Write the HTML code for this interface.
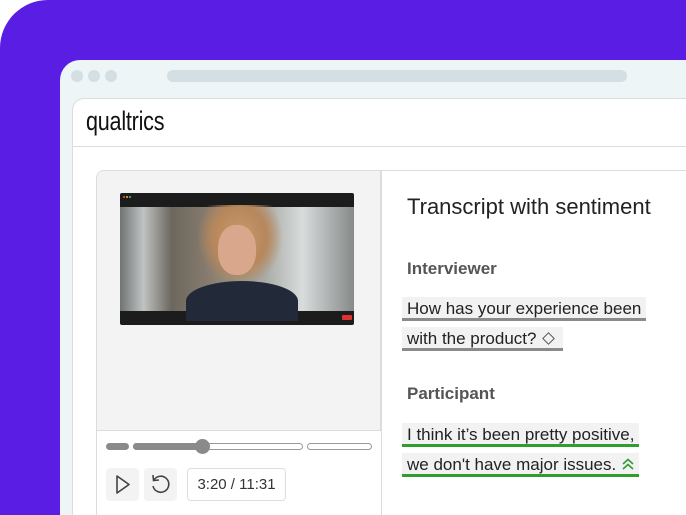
<!DOCTYPE html>
<html><head><meta charset="utf-8"><style>
*{margin:0;padding:0;box-sizing:border-box}
html,body{width:686px;height:515px;overflow:hidden;background:#fff;font-family:"Liberation Sans",sans-serif;position:relative}
.bg{position:absolute;left:0;top:0;width:686px;height:515px;background:#5a1de3;border-top-left-radius:48px}
.win{position:absolute;left:60px;top:60px;width:626px;height:455px;background:#edf5f7;border-top-left-radius:20px}
.dot{position:absolute;top:10px;width:12px;height:12px;border-radius:50%;background:#d3dfe2}
.url{position:absolute;left:107px;top:10px;width:460px;height:12px;border-radius:6px;background:#d3dfe2}
.panel{position:absolute;left:72px;top:98px;width:614px;height:417px;background:#fff;border:1px solid #dcdcdc;border-right:none;border-bottom:none;border-top-left-radius:12px}
.logo{position:absolute;left:86px;top:106px;font-size:27px;color:#111;transform:scaleX(.8);transform-origin:left;letter-spacing:-.3px}
.hdiv{position:absolute;left:72px;top:146px;width:614px;height:1px;background:#dcdcdc}
.card{position:absolute;left:96px;top:170px;width:590px;height:345px;border:1px solid #dcdcdc;border-right:none;border-bottom:none;border-top-left-radius:8px;overflow:hidden;background:#fff}
.left{position:absolute;left:0;top:0;width:284px;height:260px;background:#f3f3f3;border-right:1px solid #dcdcdc;border-bottom:1px solid #dcdcdc}
.lcol{position:absolute;left:284px;top:0;width:1px;height:345px;background:#dcdcdc}
.vid{position:absolute;left:23px;top:22px;width:234px;height:132px;background:#1c1c1c;border-radius:2px;overflow:hidden}
.scene{position:absolute;left:0;top:14px;width:234px;height:104px;background:linear-gradient(90deg,#6f7372 0%,#bfc3c3 10%,#6c675e 22%,#8b7f70 40%,#a9aba6 62%,#d8dcdc 78%,#868b8a 100%)}
.t{position:absolute;font-size:16px;color:#222}
.ln{position:absolute;left:402px;height:24px;background:#f2f2f2;font-size:17px;color:#222;padding:2px 5px 0 5px;line-height:20px;white-space:nowrap}
.g{border-bottom:3px solid #8a8a8a}
.gr{border-bottom:3px solid #2f9e2f}
.btn{position:absolute;top:468px;height:33px;background:#f3f3f3;border-radius:4px}
</style></head><body>
<div class="bg"></div>
<div class="win">
<div class="dot" style="left:11px"></div><div class="dot" style="left:28px"></div><div class="dot" style="left:45px"></div>
<div class="url"></div>
</div>
<div class="panel"></div>
<div class="logo">qualtrics</div>
<div class="hdiv"></div>
<div class="card">
<div class="left">
<div class="vid">
<div style="position:absolute;left:3px;top:3px;width:2px;height:2px;background:#e55;border-radius:50%"></div>
<div style="position:absolute;left:6px;top:3px;width:2px;height:2px;background:#eb3;border-radius:50%"></div>
<div style="position:absolute;left:9px;top:3px;width:2px;height:2px;background:#5c5;border-radius:50%"></div>
<div class="scene">
<div style="position:absolute;left:78px;top:-2px;width:84px;height:80px;background:radial-gradient(ellipse at 50% 40%,#c89a6a 0%,#b7875c 45%,transparent 72%)"></div>
<div style="position:absolute;left:98px;top:18px;width:38px;height:50px;border-radius:45%;background:#d9a88c"></div>
<div style="position:absolute;left:66px;top:74px;width:112px;height:40px;border-radius:50% 50% 0 0;background:#222a3a"></div>
</div>
<div style="position:absolute;left:222px;top:122px;width:10px;height:5px;background:#d33;border-radius:1px"></div>
</div>
</div>
<div class="lcol"></div>
</div>
<div style="position:absolute;left:106px;top:443px;width:23px;height:7px;border-radius:4px;background:#8a8a8a"></div>
<div style="position:absolute;left:133px;top:443px;width:170px;height:7px;border-radius:4px;border:1px solid #999;background:#fff"></div>
<div style="position:absolute;left:133px;top:443px;width:70px;height:7px;border-radius:4px;background:#8a8a8a"></div>
<div style="position:absolute;left:195px;top:439px;width:15px;height:15px;border-radius:50%;background:#8a8a8a"></div>
<div style="position:absolute;left:307px;top:443px;width:65px;height:7px;border-radius:4px;border:1px solid #999;background:#fff"></div>
<div class="btn" style="left:106px;width:33px"><svg width="33" height="33"><path d="M11 8 L23 16.5 L11 25 Z" fill="none" stroke="#444" stroke-width="1.6" stroke-linejoin="round"/></svg></div>
<div class="btn" style="left:144px;width:33px"><svg width="33" height="33"><path d="M10 12 A8 8 0 1 1 9 18" fill="none" stroke="#444" stroke-width="1.6"/><path d="M9 7 L9.5 12.5 L15 12" fill="none" stroke="#444" stroke-width="1.6"/></svg></div>
<div class="btn" style="left:187px;width:99px;background:#fff;border:1px solid #ddd;font-size:15px;color:#333;line-height:31px;text-align:center">3:20 / 11:31</div>
<div class="t" style="left:407px;top:194px;font-size:22px;color:#222">Transcript with sentiment</div>
<div class="t" style="left:407px;top:259px;font-weight:bold;color:#555;font-size:17px">Interviewer</div>
<div class="ln g" style="top:297px;width:244px">How has your experience been</div>
<div class="ln g" style="top:327px;width:161px">with the product? <span style="display:inline-block;width:9px;height:9px;border:1.3px solid #555;transform:rotate(45deg);margin-left:3px;vertical-align:1px"></span></div>
<div class="t" style="left:407px;top:384px;font-weight:bold;color:#555;font-size:17px">Participant</div>
<div class="ln gr" style="top:423px;width:237px">I think it’s been pretty positive,</div>
<div class="ln gr" style="top:453px;width:237px">we don't have major issues. <svg width="14" height="12" style="vertical-align:0"><path d="M2 6 L7 1.5 L12 6 M2 11 L7 6.5 L12 11" fill="none" stroke="#2f9e2f" stroke-width="1.6"/></svg></div>
</body></html>
